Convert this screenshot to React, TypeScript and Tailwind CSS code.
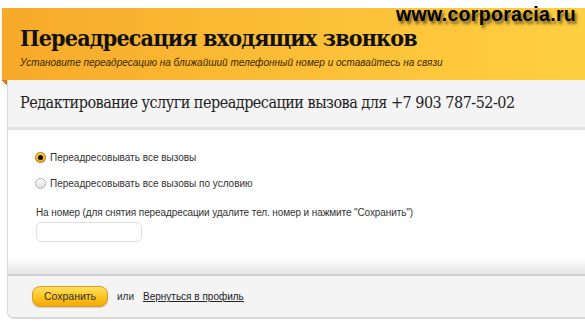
import React from "react";

function Radio({ checked }: { checked?: boolean }) {
  if (checked) {
    return (
      <div className="w-[11px] h-[11px] rounded-full border border-[#b98212] bg-gradient-to-b from-[#fbd34a] to-[#eea20c] flex items-center justify-center shadow-[0_0_1px_rgba(0,0,0,0.3)]">
        <div className="w-[5px] h-[5px] rounded-full bg-[#111]" />
      </div>
    );
  }
  return (
    <div className="w-[11px] h-[11px] rounded-full border border-[#b4b4b4] bg-gradient-to-b from-[#ffffff] to-[#dcdcdc]" />
  );
}

export default function App() {
  return (
    <div className="w-[585px] h-[325px] bg-white relative overflow-hidden font-['Liberation_Sans',Arial,sans-serif]">
      <div className="absolute right-[9px] top-[0px] text-[19.5px] font-bold text-black tracking-[0.3px] [text-shadow:2px_3px_3px_rgba(0,0,0,0.55)] z-10">
        www.corporacia.ru
      </div>
      <div className="pt-[8px] pl-[2px]">
        <div className="h-[72px] bg-gradient-to-r from-[#f7a92a] via-[#fbbe36] to-[#fecf41] shadow-[0_2px_3px_rgba(0,0,0,0.12)] pl-[18px] pt-[16px]">
          <div className="text-[23px] leading-[28px] font-bold text-[#111] font-['DejaVu_Serif_Condensed','Liberation_Serif',serif] tracking-[-0.8px]">
            Переадресация входящих звонков
          </div>
          <div className="text-[10px] leading-[14px] italic text-[#3a2a00] mt-[4px]">
            Установите переадресацию на ближайший телефонный номер и оставайтесь на связи
          </div>
        </div>
        <div className="flex">
          <div className="w-[5px] h-[6px] bg-[linear-gradient(to_bottom_left,transparent_50%,#e2741a_50%)] rotate-180 shrink-0" />
          <div className="flex-1 border-l border-b-2 border-[#d9d9d9] rounded-bl-[7px] overflow-hidden -mr-[10px]">
            <div className="h-[50px] bg-[#f4f4f4] border-b-[3px] border-[#e3e3e3] flex items-center pl-[12px] pb-[2px]">
              <span className="text-[16px] text-[#222] whitespace-nowrap font-['DejaVu_Serif_Condensed','Liberation_Serif',serif] tracking-[-0.5px]">
                Редактирование услуги переадресации вызова для +7 903 787-52-02
              </span>
            </div>
            <div className="bg-white pt-[21px] text-[10px] text-[#333]">
              <div className="flex items-center pl-[27px] gap-[4px] h-[13px]">
                <Radio checked />
                <span>Переадресовывать все вызовы</span>
              </div>
              <div className="flex items-center pl-[27px] gap-[4px] h-[13px] mt-[13px]">
                <Radio />
                <span>Переадресовывать все вызовы по условию</span>
              </div>
              <div className="pl-[28px] mt-[16px] leading-[13px] tracking-[-0.1px]">
                На номер (для снятия переадресации удалите тел. номер и нажмите "Сохранить")
              </div>
              <div className="pl-[28px] mt-[3px]">
                <div className="w-[106px] h-[20px] rounded-[5px] border border-[#dedede] bg-white" />
              </div>
              <div className="h-[32px] bg-gradient-to-b from-white via-white to-[#e6e6e6]" />
            </div>
            <div className="border-t-2 border-[#cdcdcd] bg-[#f4f4f4] h-[43px] flex items-center pl-[24px] text-[10px] text-[#333]">
              <div className="w-[76px] h-[21px] rounded-[8px] border border-[#dc9a28] bg-gradient-to-b from-[#ffe15a] via-[#fcc623] to-[#f3a800] flex items-center justify-center shadow-[0_1px_1px_rgba(0,0,0,0.15)] text-[#333] text-[10.5px]">
                Сохранить
              </div>
              <span className="ml-[9px]">или</span>
              <span className="ml-[9px] underline text-[#222]">Вернуться в профиль</span>
            </div>
          </div>
        </div>
      </div>
    </div>
  );
}
